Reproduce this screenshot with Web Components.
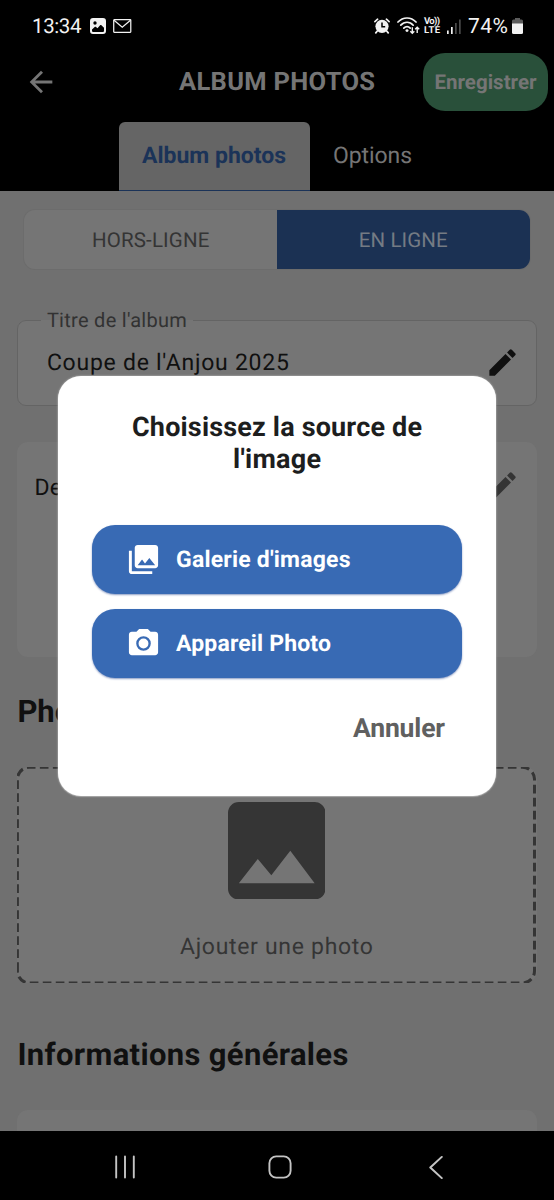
<!DOCTYPE html>
<html lang="fr">
<head>
<meta charset="utf-8">
<title>Album photos</title>
<style>
html,body{margin:0;height:100%;background:#000;overflow:hidden}
body{font-family:Roboto,"Liberation Sans",sans-serif;text-rendering:geometricPrecision}
</style>
</head>
<body>
<album-screen></album-screen>
<script>
const define = (name, html, after) => {
  const t = document.createElement('template');
  t.innerHTML = html;
  customElements.define(name, class extends HTMLElement {
    constructor() { super(); this.attachShadow({mode: 'open'}).append(t.content.cloneNode(true)); }
    connectedCallback() { if (after) after.call(this, this.shadowRoot); }
  });
};

/* One line of text; "span" tracks the letters out to the given width. */
define('ui-text', `<style>
:host{display:block;white-space:nowrap;line-height:1}
span{display:inline-block}
</style><span><slot></slot></span>`, function (root) {
  const s = root.querySelector('span');
  const size = this.getAttribute('size');
  if (size) this.style.fontSize = size + 'px';
  const want = +this.getAttribute('span');
  if (want) {
    const n = this.textContent.length;
    const track = (want - s.getBoundingClientRect().width) / (n - 1);
    s.style.letterSpacing = track + 'px';
    s.style.marginRight = -track + 'px';
  }
});

const icons = {
  back: ['0 0 24 24', '<path fill="currentColor" d="M20 11H7.83l5.59-5.59L12 4l-8 8 8 8 1.41-1.41L7.83 13H20v-2z"/>'],
  pencil: ['0 0 24 24', '<path fill="currentColor" d="M3 17.25V21h3.75L17.81 9.94l-3.75-3.75L3 17.25zM20.71 7.04a1 1 0 0 0 0-1.41l-2.34-2.34a1 1 0 0 0-1.41 0l-1.83 1.83 3.75 3.75 1.83-1.83z"/>'],
  gallery: ['0 0 24 24', '<path fill="currentColor" d="M22 16V4c0-1.100-.9-2-2-2H8c-1.100 0-2 .9-2 2v12c0 1.100.9 2 2 2h12c1.100 0 2-.9 2-2zm-11-4l2.030 2.710L16 11l4 5H8l3-4zM2 6v14c0 1.100.9 2 2 2h14v-2H4V6H2z"/>'],
  camera: ['0 0 24 24', '<path fill="currentColor" fill-rule="evenodd" d="M9 2L7.170 4H4c-1.100 0-2 .9-2 2v12c0 1.100.9 2 2 2h16c1.100 0 2-.9 2-2V6c0-1.100-.9-2-2-2h-3.170L15 2H9zm3 15a5 5 0 1 1 0-10 5 5 0 0 1 0 10zM12 8.600a3.400 3.400 0 1 0 0 6.800 3.400 3.400 0 0 0 0-6.800z"/>'],
  photo: ['3 3 18 18', '<path fill="currentColor" d="M21 19V5c0-1.100-.9-2-2-2H5c-1.100 0-2 .9-2 2v14c0 1.100.9 2 2 2h14c1.100 0 2-.9 2-2zM8.500 13.500l2.500 3.010L14.500 12l4.500 6H5l3.500-4.500z"/>'],
  picture: ['0 0 16 16', '<path fill="currentColor" fill-rule="evenodd" d="M3 0h10a3 3 0 0 1 3 3v10a3 3 0 0 1-3 3H3a3 3 0 0 1-3-3V3a3 3 0 0 1 3-3zM2 12.500c0 1 .6 1.500 1.500 1.500h9c1 0 1.500-.5 1.500-1.500V9.800l-2.600-2.600c-.4-.4-.9-.4-1.300 0L7.500 10.300 6 9c-.4-.4-.9-.4-1.300 0L2 11.500zM5 3.300a1.700 1.700 0 1 0 0 3.400 1.700 1.700 0 0 0 0-3.400z"/>'],
  mail: ['0 0 18 14', '<g fill="none" stroke="currentColor" stroke-width="1.200"><rect x=".7" y=".7" width="16.600" height="12.600" rx=".5"/><path d="M1 1.200l8 7 8-7"/></g>'],
  alarm: ['0 0 16 16', '<circle cx="8" cy="8.300" r="6.600" fill="currentColor"/><path d="M.9 3.600L3.600 1.200M15.100 3.600L12.400 1.200M3.300 13l-1.500 1.900M12.700 13l1.500 1.900" stroke="currentColor" stroke-width="1.700" stroke-linecap="round"/><path d="M8 4.500v4.300h3.200" fill="none" stroke="#000" stroke-width="1.500"/>'],
  wifi: ['0 0 23 18', '<g fill="none" stroke="currentColor" stroke-width="1.700" stroke-linecap="round"><path d="M1 5.200C6-.4 14-.4 19 5.200M3.800 8.400c3.500-4 9-4 12.400 0M6.800 11.400c2-2 4.500-2 6.400 0"/></g><circle cx="10" cy="14" r="1.500" fill="currentColor"/><path d="M15.300 10.500v6M13.300 14.700l2 2 2-2M20.200 16.500v-5.800M18.200 12.600l2-2 2 2" fill="none" stroke="currentColor" stroke-width="1.400"/>'],
  signal: ['0 0 14 15', '<path fill="currentColor" d="M0 11.500h1.700V15H0zM4 8h1.700v7H4z"/><path fill="#4a4a4a" d="M8 4h1.700v11H8zM12 .5h1.700V15H12z"/>'],
  battery: ['0 0 11 16', '<path fill="#5c5c5c" d="M3 0h5v1.500h1.500A1.500 1.500 0 0 1 11 3v3H0V3a1.500 1.500 0 0 1 1.500-1.500H3z"/><path fill="currentColor" d="M0 5.500h11v9a1.500 1.500 0 0 1-1.500 1.500h-8A1.500 1.500 0 0 1 0 14.500z"/>'],
  recents: ['0 0 22 24', '<path d="M2.200 1.500v21M11 1.500v21M19.800 1.500v21" stroke="currentColor" stroke-width="1.900" stroke-linecap="round"/>'],
  home: ['0 0 24 24', '<rect x="1.400" y="1.400" width="21.200" height="21.200" rx="6.800" fill="none" stroke="currentColor" stroke-width="1.900"/>'],
  previous: ['0 0 14 26', '<path d="M12.800 2L1.300 13l11.500 11" fill="none" stroke="currentColor" stroke-width="2" stroke-linecap="round" stroke-linejoin="round"/>']
};
define('ui-icon', `<style>:host{display:block;flex:none}svg{display:block;width:100%;height:100%}</style>`, function (root) {
  const [box, body] = icons[this.getAttribute('name')];
  root.innerHTML += `<svg viewBox="${box}" preserveAspectRatio="none">${body}</svg>`;
  this.style.width = this.getAttribute('w') + 'px';
  this.style.height = (this.getAttribute('h') || this.getAttribute('w')) + 'px';
});

define('status-bar', `<style>
:host{display:flex;align-items:center;height:52px;box-sizing:border-box;padding:0 31px 0 32px;color:#f2f2f2;background:#000}
.r{margin-left:auto;display:flex;align-items:center}
.volte{font-weight:700;display:grid;gap:0;margin-left:4px;width:16px}
.n{padding-top:2px}
</style>
<ui-text class="n" size="20.500" span="49.500">13:34</ui-text>
<ui-icon name="picture" w="16" style="margin-left:8.500px"></ui-icon>
<ui-icon name="mail" w="18.500" h="14" style="margin-left:7px"></ui-icon>
<div class="r">
<ui-icon name="alarm" w="16"></ui-icon>
<ui-icon name="wifi" w="23" h="17.500" style="margin-left:7px"></ui-icon>
<div class="volte"><ui-text size="9.500" span="16">Vo))</ui-text><ui-text size="9.500" span="16">LTE</ui-text></div>
<ui-icon name="signal" w="14" h="15" style="margin-left:7px"></ui-icon>
<ui-text class="n" size="21" span="40" style="margin-left:7px">74%</ui-text>
<ui-icon name="battery" w="11" h="16" style="margin-left:4px"></ui-icon>
</div>`);

define('app-bar', `<style>
:host{display:grid;grid-template-columns:179px 1fr auto;align-items:center;height:59px;padding-right:6px;background:#000;color:#757575;font-weight:700}
ui-icon{margin-left:23.500px}
:host>ui-text{padding-top:2px}
.save{display:grid;place-items:center;width:125px;height:58px;border-radius:22px;background:#29503a}
.save ui-text{padding-top:3px}
</style>
<ui-icon name="back" w="34"></ui-icon>
<ui-text size="25.500" span="196">ALBUM PHOTOS</ui-text>
<div class="save"><ui-text size="20.500" span="102">Enregistrer</ui-text></div>`);

define('tab-bar', `<style>
:host{display:flex;align-items:flex-end;height:80px;padding-left:118.500px;background:#000;color:#757575}
div{display:grid;place-items:center;height:69px;box-sizing:border-box;padding-bottom:1px}
.on{width:191px;background:#656565;color:#1b3358;font-weight:700;border-radius:6px 6px 0 0;border-bottom:1.500px solid #1b3358}
.off{padding-left:23.500px;padding-bottom:3px}
</style>
<div class="on"><ui-text size="23" span="144">Album photos</ui-text></div>
<div class="off"><ui-text size="23" span="79">Options</ui-text></div>`);

define('mode-switch', `<style>
:host{display:grid;grid-template-columns:1fr 1fr;height:59px;border-radius:11px;overflow:hidden;background:#757575;box-shadow:0 0 0 1px #6c6c6c;color:#343434}
div{display:grid;place-items:center;padding-top:3px}
.on{background:#1b3153;color:#747b84}
</style>
<div><ui-text size="20.500" span="117.500">HORS-LIGNE</ui-text></div>
<div class="on"><ui-text size="20.500" span="89">EN LIGNE</ui-text></div>`);

define('title-field', `<style>
:host{display:block}
fieldset{margin:0;padding:0 20px 0 22.500px;border:1px solid #646464;border-radius:9px;background:#757575;height:97px;box-sizing:border-box;min-width:0}
legend{padding:0 6px;height:22px;display:flex;align-items:center;color:#323232}
legend ui-text{padding-bottom:1px}
.row{display:flex;align-items:center;justify-content:space-between;height:63px;padding-left:6px;color:#101010}
.row ui-text{margin-top:-1px}
</style>
<fieldset><legend><ui-text size="20" span="140">Titre de l'album</ui-text></legend>
<div class="row"><ui-text size="23" span="242">Coupe de l'Anjou 2025</ui-text><ui-icon name="pencil" w="35" style="margin-right:-4px"></ui-icon></div>
</fieldset>`);

define('surface-card', `<style>:host{display:block;background:#757575;border-radius:11px;box-sizing:border-box}</style><slot></slot>`);

define('section-title', `<style>:host{display:block;font-weight:700;color:#101010}</style><slot></slot>`);

define('photo-drop', `<style>
:host{display:grid;height:216px;background:#757575;border-radius:12px;color:#353535}
svg,.in{grid-area:1/1}
svg{width:519px;height:216px;overflow:hidden}
.in{display:flex;flex-direction:column;align-items:center;padding:34.500px 1px 0 0}
ui-text{margin-top:35.500px}
</style>
<svg viewBox="0 0 519 216"><path d="M.4 204V12A12 12 0 0 1 12 .2H505.500A12 12 0 0 1 517.500 12V204A12 12 0 0 1 505.500 216H12A12 12 0 0 1 .4 204" fill="none" stroke="#353535" stroke-width="3" stroke-dasharray="8.650 4.350"/></svg>
<div class="in"><ui-icon name="photo" w="97.500"></ui-icon><ui-text size="23" span="193">Ajouter une photo</ui-text></div>`);

define('nav-bar', `<style>
:host{display:grid;grid-template-columns:repeat(3,1fr);justify-items:center;align-items:center;height:69px;padding:3px 40.200px 0 46.800px;box-sizing:border-box;background:#000;color:#c4c4c4}
</style>
<ui-icon name="recents" w="22" h="24"></ui-icon>
<ui-icon name="home" w="24"></ui-icon>
<ui-icon name="previous" w="14" h="25"></ui-icon>`);

define('source-dialog', `<style>
:host{display:flex;flex-direction:column;box-sizing:border-box;width:438px;height:420px;padding:34.500px 34px 0;border-radius:23px;background:#fff;box-shadow:0 0 2px #ccc,0 1px 1px #999;color:#1d1e1e;font-weight:700}
.t{display:grid;justify-items:center;height:114.700px;align-content:start}
.t ui-text{height:32px;line-height:32px}
.b{display:grid;gap:14.500px}
.c{display:flex;justify-content:flex-end;padding:38.500px 17px 0;color:#606060}
.opt{display:flex;align-items:center;height:69px;padding-left:34px;border-radius:23px;background:#386ab4;color:#fff;box-shadow:0 1px 2px #8b9cc4}
.opt ui-icon{margin-right:15px}
</style>
<div class="t"><ui-text size="27" span="290">Choisissez la source de</ui-text><ui-text size="27" span="88">l'image</ui-text></div>
<div class="b">
<div class="opt"><ui-icon name="gallery" w="35"></ui-icon><ui-text size="23" span="174.500">Galerie d'images</ui-text></div>
<div class="opt"><ui-icon name="camera" w="35"></ui-icon><ui-text size="23" span="155">Appareil Photo</ui-text></div>
</div>
<div class="c"><ui-text size="26.500" span="92">Annuler</ui-text></div>`);

define('album-screen', `<style>
:host{display:flex;flex-direction:column;width:554px;height:1200px;position:relative;overflow:hidden}
main{flex:1;min-height:0;overflow:hidden;background:#707070;display:flex;flex-direction:column;padding:19px 17.500px 0 17.400px;box-sizing:border-box}
main>*{flex:none}
mode-switch{margin:0 7px 0 7px}
title-field{margin-top:40px}
.desc{margin-top:36px;height:215px;padding:26px 16.500px 0 17px;display:flex;justify-content:space-between;align-items:flex-start;color:#101010}
.desc ui-text{margin-top:8px}
.desc ui-icon{color:#343434}
.h1{margin-top:38.500px;height:71.500px}
.h2{margin-top:56px;height:71px}
.info{height:60px}
source-dialog{position:absolute;left:58px;top:376px}
</style>
<status-bar></status-bar><app-bar></app-bar><tab-bar></tab-bar>
<main>
<mode-switch></mode-switch>
<title-field></title-field>
<surface-card class="desc"><ui-text size="23" span="119">Description</ui-text><ui-icon name="pencil" w="35"></ui-icon></surface-card>
<section-title class="h1"><ui-text size="31">Photos</ui-text></section-title>
<photo-drop></photo-drop>
<section-title class="h2"><ui-text size="31" span="331">Informations générales</ui-text></section-title>
<surface-card class="info"></surface-card>
</main>
<nav-bar></nav-bar>
<source-dialog></source-dialog>`);
</script>
</body>
</html>
